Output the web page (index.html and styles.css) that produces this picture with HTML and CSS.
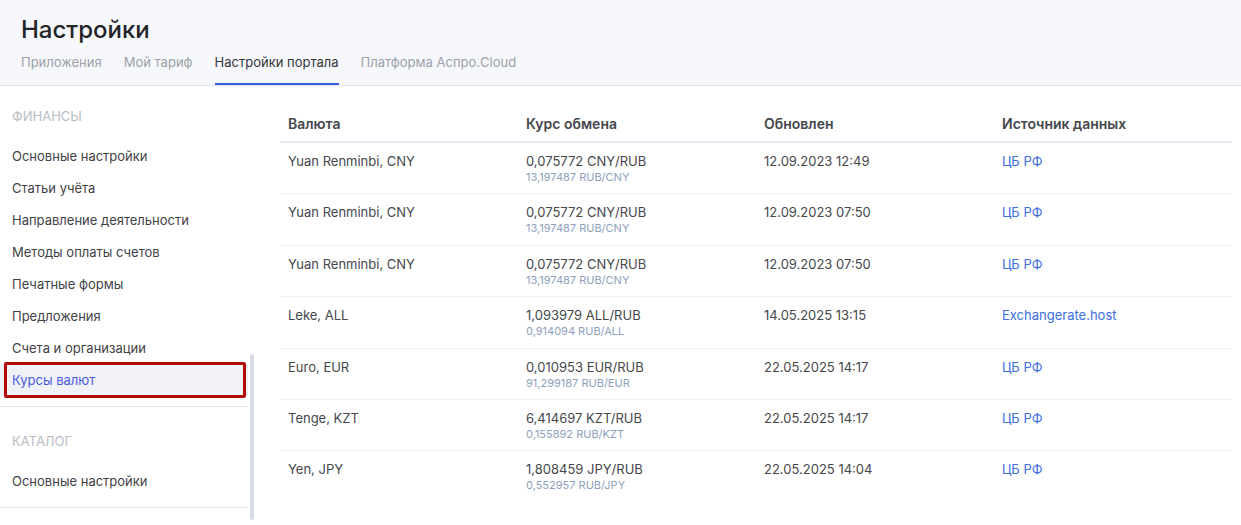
FILE: index.html
```html
<!DOCTYPE html>
<html lang="ru">
<head>
<meta charset="utf-8">
<title>Настройки</title>
<link rel="stylesheet" href="styles.css">
</head>
<body>
	<div class="pageHeader">
		<h1 class="pageTitle">Настройки</h1>
		<div class="tabs">
			<a class="tab">Приложения</a>
			<a class="tab">Мой тариф</a>
			<a class="tab tabActive">Настройки портала</a>
			<a class="tab">Платформа Аспро.Cloud</a>
		</div>
	</div>

	<div class="layout">
		<div class="sidebar">
			<div class="navSection">
				<div class="navTitle">Финансы</div>
				<a class="navItem">Основные настройки</a>
				<a class="navItem">Статьи учёта</a>
				<a class="navItem">Направление деятельности</a>
				<a class="navItem">Методы оплаты счетов</a>
				<a class="navItem">Печатные формы</a>
				<a class="navItem">Предложения</a>
				<a class="navItem">Счета и организации</a>
				<a class="navItem navItemActive">Курсы валют</a>
			</div>
			<div class="navSection">
				<div class="navTitle">Каталог</div>
				<a class="navItem">Основные настройки</a>
			</div>
			<div class="scrollThumb"></div>
		</div>

		<div class="content">
			<table class="ratesTable">
				<thead>
					<tr>
						<th>Валюта</th>
						<th>Курс обмена</th>
						<th>Обновлен</th>
						<th>Источник данных</th>
					</tr>
				</thead>
				<tbody>
					<tr>
						<td>Yuan Renminbi, CNY</td>
						<td>0,075772 CNY/RUB<div class="subRate">13,197487 RUB/CNY</div></td>
						<td>12.09.2023 12:49</td>
						<td><a class="sourceLink">ЦБ РФ</a></td>
					</tr>
					<tr>
						<td>Yuan Renminbi, CNY</td>
						<td>0,075772 CNY/RUB<div class="subRate">13,197487 RUB/CNY</div></td>
						<td>12.09.2023 07:50</td>
						<td><a class="sourceLink">ЦБ РФ</a></td>
					</tr>
					<tr>
						<td>Yuan Renminbi, CNY</td>
						<td>0,075772 CNY/RUB<div class="subRate">13,197487 RUB/CNY</div></td>
						<td>12.09.2023 07:50</td>
						<td><a class="sourceLink">ЦБ РФ</a></td>
					</tr>
					<tr>
						<td>Leke, ALL</td>
						<td>1,093979 ALL/RUB<div class="subRate">0,914094 RUB/ALL</div></td>
						<td>14.05.2025 13:15</td>
						<td><a class="sourceLink">Exchangerate.host</a></td>
					</tr>
					<tr>
						<td>Euro, EUR</td>
						<td>0,010953 EUR/RUB<div class="subRate">91,299187 RUB/EUR</div></td>
						<td>22.05.2025 14:17</td>
						<td><a class="sourceLink">ЦБ РФ</a></td>
					</tr>
					<tr>
						<td>Tenge, KZT</td>
						<td>6,414697 KZT/RUB<div class="subRate">0,155892 RUB/KZT</div></td>
						<td>22.05.2025 14:17</td>
						<td><a class="sourceLink">ЦБ РФ</a></td>
					</tr>
					<tr>
						<td>Yen, JPY</td>
						<td>1,808459 JPY/RUB<div class="subRate">0,552957 RUB/JPY</div></td>
						<td>22.05.2025 14:04</td>
						<td><a class="sourceLink">ЦБ РФ</a></td>
					</tr>
				</tbody>
			</table>
		</div>
	</div>
</body>
</html>
```

FILE: styles.css
```css
body {
	margin: 0px;
	font-family: Inter, "Noto Sans", sans-serif;
	color: #3d4045;
	background-color: #fff;
	overflow: hidden;
}

a {
	text-decoration: none;
	cursor: pointer;
}

.pageHeader {
	background-color: #f6f7fb;
	border-bottom: 1px solid #e3e5ec;
	padding: 14px 21px 0px;
}

.pageTitle {
	margin: 0px;
	font-size: 24px;
	line-height: 32px;
	font-weight: 500;
	color: #222428;
}

.tabs {
	display: flex;
	gap: 22px;
	margin-top: 6px;
}

.tab {
	font-size: 13px;
	line-height: 20px;
	color: #9ca1aa;
	padding-bottom: 11px;
	border-bottom: 2px solid transparent;
}

.tabActive {
	color: #33363b;
	border-bottom-color: #3a5ee0;
}

.layout {
	display: flex;
}

.sidebar {
	position: relative;
	width: 248px;
	flex-shrink: 0;
	height: 440px;
}

.navSection {
	padding: 24px 0px 10px;
	border-bottom: 1px solid #e6e8ef;
}

.navSection:first-child {
	padding-top: 20px;
}

.navTitle {
	font-size: 13px;
	line-height: 20px;
	text-transform: uppercase;
	color: #b8bcc3;
	padding-left: 12px;
	margin-bottom: 14px;
}

.navItem {
	display: block;
	position: relative;
	font-size: 13px;
	line-height: 32px;
	padding-left: 12px;
	color: #3f4247;
}

.navItemActive {
	background-color: #f0f2f8;
	color: #4a5ce0;
}

/* red annotation frame over the active item */
.navItemActive::after {
	content: "";
	position: absolute;
	top: -2px;
	bottom: -2px;
	left: 4px;
	right: 2px;
	border: 3px solid #b30808;
	border-radius: 2px;
}

.scrollThumb {
	position: absolute;
	left: 250px;
	top: 268px;
	width: 4px;
	height: 166px;
	border-radius: 2px;
	background-color: #d8dce6;
}

.content {
	flex: 1;
	padding: 14px 9px 0px 32px;
}

.ratesTable {
	width: 100%;
	table-layout: fixed;
	border-collapse: collapse;
}

.ratesTable th {
	text-align: left;
	font-size: 14px;
	line-height: 20px;
	font-weight: 600;
	color: #45474c;
	padding: 14px 8px 7px;
	border-bottom: 2px solid #e6e8f2;
}

.ratesTable td {
	vertical-align: top;
	font-size: 13px;
	line-height: 18px;
	color: #45474c;
	padding: 9px 8px 9.4px;
	height: 32px;
	border-bottom: 1px solid #eceef4;
}

.ratesTable tbody tr:last-child td {
	border-bottom: none;
}

.subRate {
	font-size: 11px;
	line-height: 14px;
	color: #8ea1bc;
}

.sourceLink {
	color: #3b6ee0;
}
```
